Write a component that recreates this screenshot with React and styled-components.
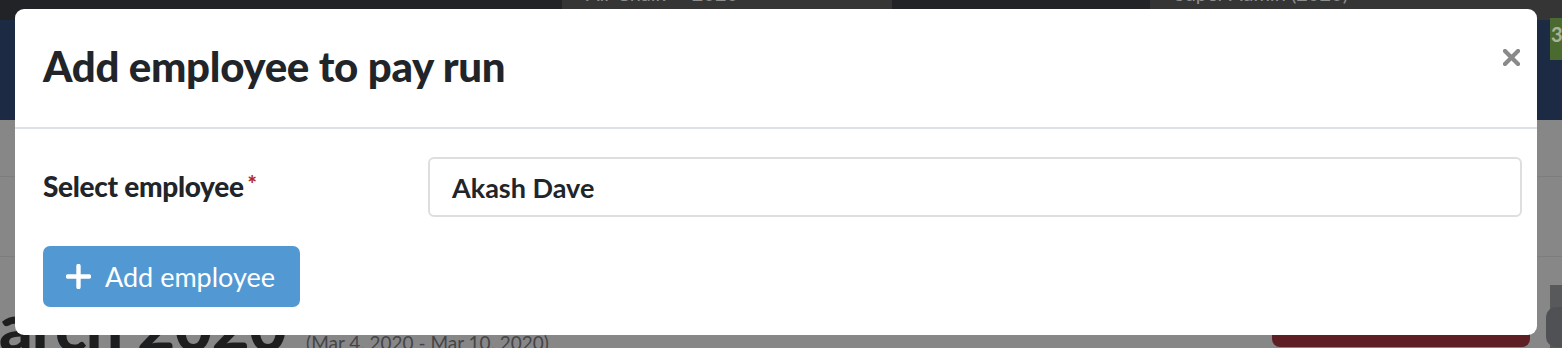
import React from "react";
import styled, { createGlobalStyle } from "styled-components";

const GlobalStyle = createGlobalStyle`
  html, body {
    margin: 0;
    padding: 0;
    width: 1562px;
    height: 348px;
    overflow: hidden;
    font-family: "Lato", "Open Sans", sans-serif;
  }
  * { box-sizing: border-box; }
`;

const Page = styled.div`
  position: relative;
  width: 1562px;
  height: 348px;
  overflow: hidden;
  background: #878787;
  display: flex;
  flex-direction: column;
`;

const TopBar = styled.div`
  flex-shrink: 0;
  height: 20px;
  background: #212327;
  display: flex;
  padding-left: 562px;
  gap: 258px;
`;

const Tab = styled.div`
  width: ${(p) => p.$width}px;
  background: #353535;
  color: #8e8e8e;
  font-size: 20px;
  overflow: hidden;
  padding-left: ${(p) => p.$pad}px;

  span {
    display: block;
    margin-top: -18px;
    line-height: 22px;
  }
`;

const NavBand = styled.div`
  flex-shrink: 0;
  height: 100px;
  background: #1c2a44;
  display: flex;
  justify-content: flex-end;
  align-items: flex-start;
`;

const Badge = styled.div`
  width: 12px;
  height: 42px;
  margin-top: -2px;
  background: #4b6a2f;
  color: #a8b39a;
  font-weight: 700;
  font-size: 20px;
  padding-top: 4px;
  padding-left: 1px;
  overflow: hidden;
`;

const Row = styled.div`
  flex-shrink: 0;
  height: ${(p) => p.$h}px;
  border-bottom: 1px solid #7d7d7d;
`;

const HeadingRow = styled.div`
  flex: 1;
  min-height: 0;
  display: flex;
  align-items: flex-start;
  position: relative;
`;

const DarkStrip = styled.div`
  position: absolute;
  right: 0;
  top: 28px;
  width: 12px;
  height: 80px;
  background: #58595b;
`;

const BigTitle = styled.div`
  margin-left: -62px;
  margin-top: 36px;
  font-size: 66px;
  font-weight: 900;
  color: #1d1e20;
  line-height: 66px;
  letter-spacing: -1px;
  white-space: nowrap;
`;

const DateRange = styled.div`
  margin-left: 20px;
  margin-top: 74px;
  font-size: 19px;
  color: #444548;
  white-space: nowrap;
`;

const RedButton = styled.div`
  margin-left: auto;
  margin-right: 32px;
  margin-top: 40px;
  width: 258px;
  height: 50px;
  border-radius: 8px;
  background: #5e1f24;
`;

const GreyPill = styled.div`
  position: absolute;
  right: -30px;
  top: 50px;
  width: 46px;
  height: 40px;
  border-radius: 10px;
  background: #505154;
`;

const Modal = styled.div`
  position: absolute;
  left: 15px;
  top: 9px;
  width: 1522px;
  height: 326px;
  background: #fff;
  border-radius: 9px;
  display: flex;
  flex-direction: column;
  overflow: hidden;
`;

const ModalHeader = styled.div`
  height: 120px;
  border-bottom: 2px solid #dee2e6;
  display: flex;
  align-items: center;
  justify-content: space-between;
  padding: 0 15px 0 28px;
`;

const ModalTitle = styled.h2`
  margin: 0 0 4px;
  font-size: 42px;
  font-weight: 900;
  color: #212529;
  letter-spacing: -0.3px;
`;

const CloseButton = styled.button`
  border: none;
  background: none;
  padding: 0;
  margin-right: 2px;
  margin-bottom: 22px;
  width: 17px;
  height: 17px;
  display: flex;
  cursor: pointer;
`;

const ModalBody = styled.div`
  padding: 28px 15px 0 28px;
  display: flex;
  flex-direction: column;
  gap: 29px;
`;

const FieldRow = styled.div`
  display: flex;
  align-items: center;
`;

const Label = styled.label`
  width: 385px;
  font-size: 28px;
  font-weight: 900;
  color: #212529;
  margin-top: -2px;
  letter-spacing: -0.3px;

  span {
    color: #b3262b;
    margin-left: 4px;
    font-size: 22px;
    vertical-align: 5px;
  }
`;

const Input = styled.div`
  flex: 1;
  height: 60px;
  border: 2px solid #dedede;
  border-radius: 6px;
  display: flex;
  align-items: center;
  padding-left: 22px;
  font-size: 27px;
  font-weight: 700;
  color: #212529;
`;

const PrimaryButton = styled.button`
  align-self: flex-start;
  width: 257px;
  height: 61px;
  border: none;
  border-radius: 7px;
  background: #5299d3;
  color: #fff;
  font-family: "Lato", sans-serif;
  font-size: 27px;
  display: flex;
  align-items: center;
  gap: 14px;
  padding-left: 23px;
  cursor: pointer;
`;

function CloseIcon() {
  return (
    <svg width="17" height="17" viewBox="0 0 17 17">
      <path d="M2 2 L15 15 M15 2 L2 15" stroke="#8a8a8a" strokeWidth="4.2" strokeLinecap="square" />
    </svg>
  );
}

function PlusIcon() {
  return (
    <svg width="25" height="25" viewBox="0 0 25 25">
      <path d="M12.5 2 V23 M2 12.5 H23" stroke="#fff" strokeWidth="4.4" strokeLinecap="round" />
    </svg>
  );
}

export default function App() {
  return (
    <>
      <GlobalStyle />
      <Page>
        <TopBar>
          <Tab $width={330} $pad={24}><span>Air Chalk — 2020</span></Tab>
          <Tab $width={412} $pad={24}><span>Super Admin (2020)</span></Tab>
        </TopBar>
        <NavBand>
          <Badge>3</Badge>
        </NavBand>
        <Row $h={57} />
        <Row $h={80} />
        <HeadingRow>
          <DarkStrip />
          <BigTitle>March 2020</BigTitle>
          <DateRange>(Mar 4, 2020 - Mar 10, 2020)</DateRange>
          <RedButton />
          <GreyPill />
        </HeadingRow>

        <Modal>
          <ModalHeader>
            <ModalTitle>Add employee to pay run</ModalTitle>
            <CloseButton aria-label="Close">
              <CloseIcon />
            </CloseButton>
          </ModalHeader>
          <ModalBody>
            <FieldRow>
              <Label>
                Select employee<span>*</span>
              </Label>
              <Input>Akash Dave</Input>
            </FieldRow>
            <PrimaryButton>
              <PlusIcon />
              Add employee
            </PrimaryButton>
          </ModalBody>
        </Modal>
      </Page>
    </>
  );
}
